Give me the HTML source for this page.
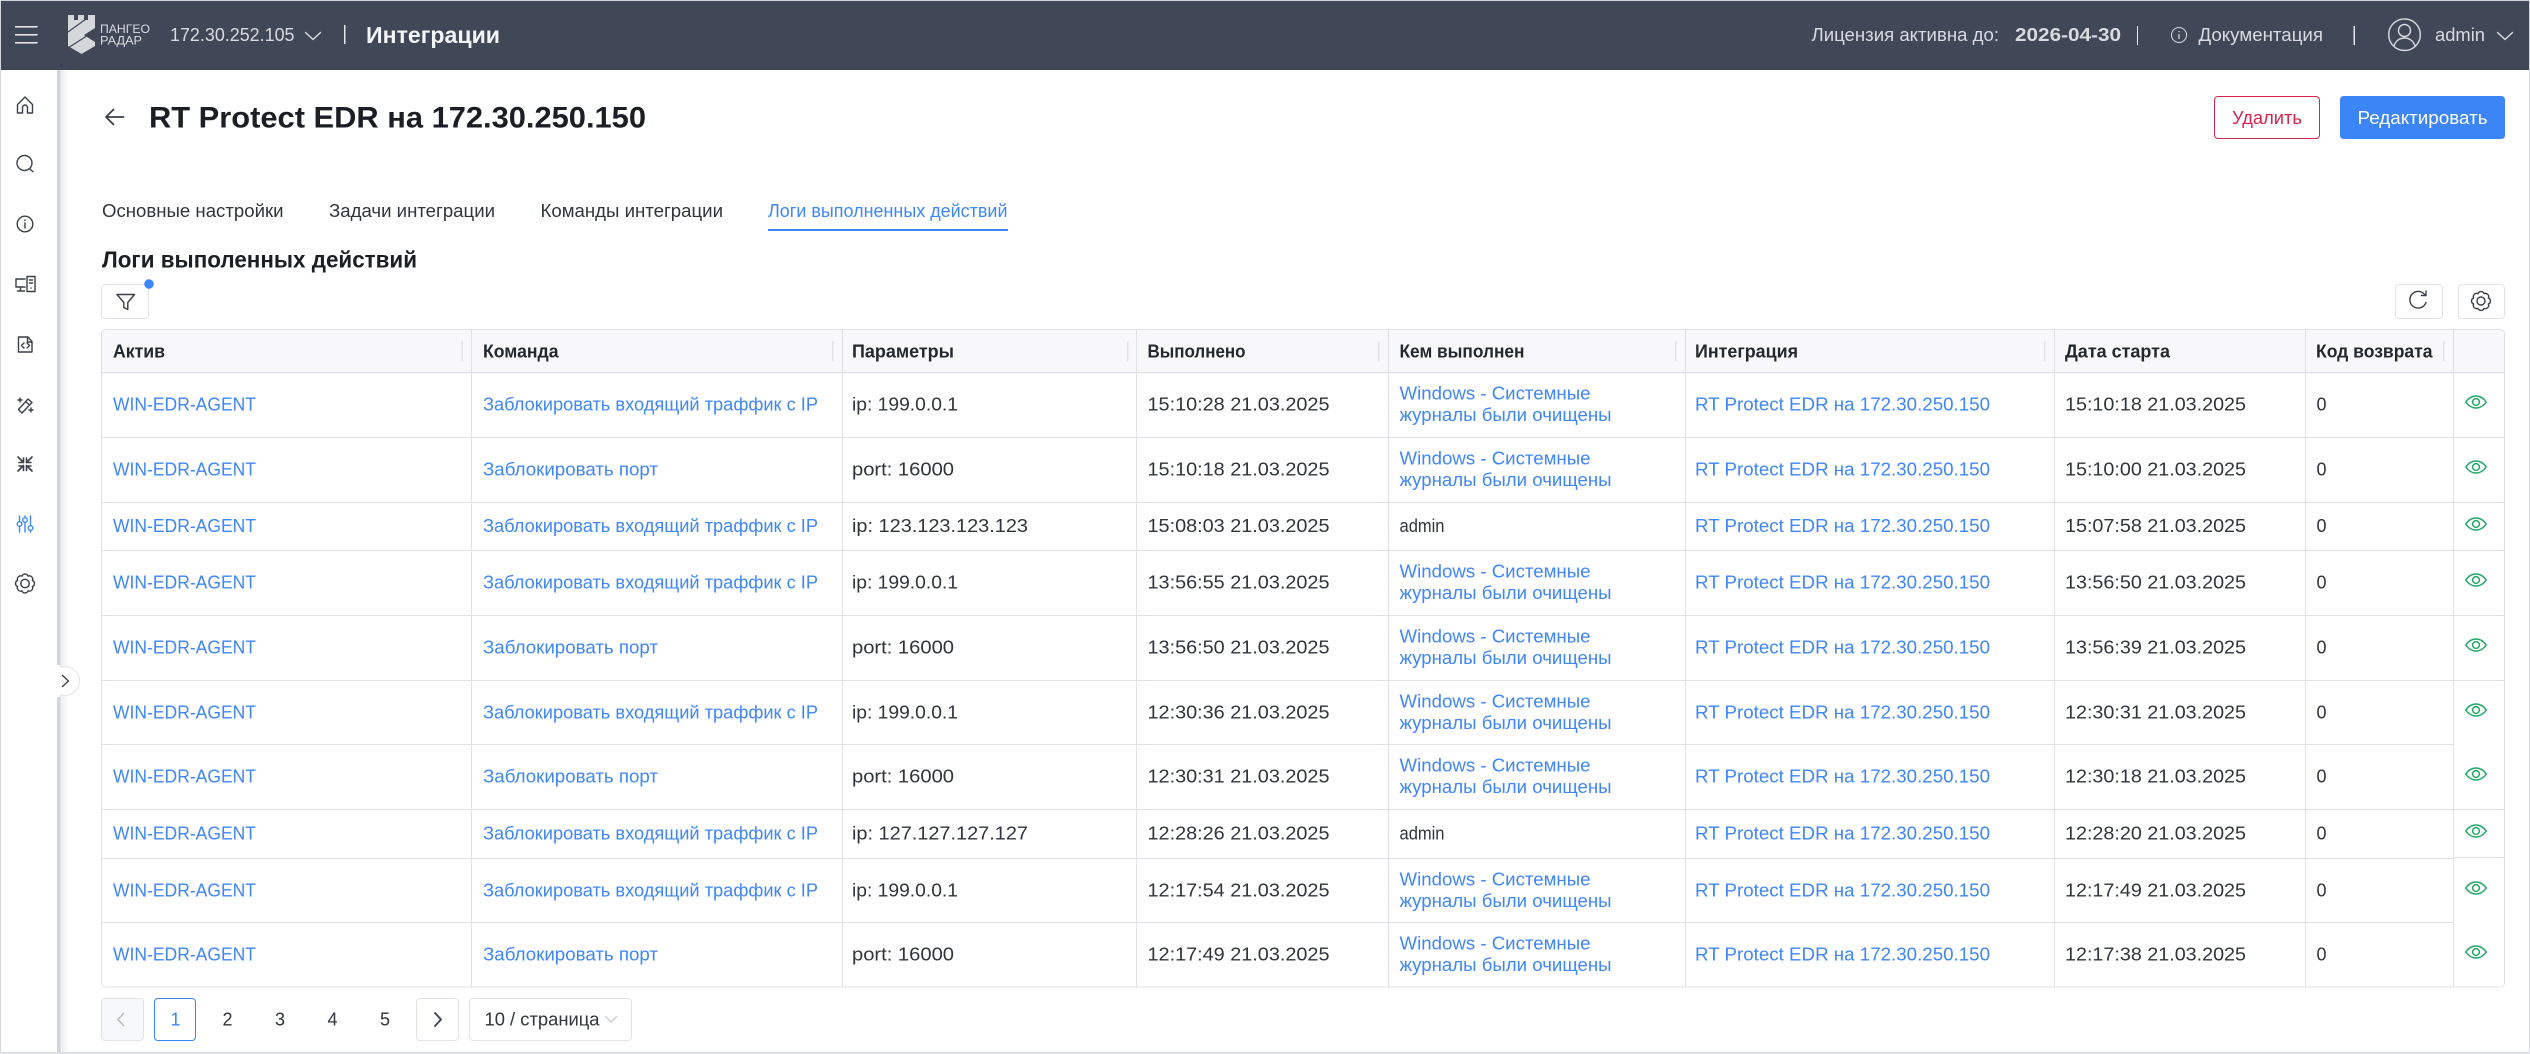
<!DOCTYPE html>
<html lang="ru"><head><meta charset="utf-8"><title>RT Protect EDR</title>
<style>
html,body{margin:0;padding:0;background:#fff;width:2530px;height:1054px;overflow:hidden}
svg{display:block}
text{font-family:"Liberation Sans","Noto Sans CJK SC",sans-serif;font-size:18px;fill:#30343c}
.l{fill:#3f86f8}
.h{font-weight:700;fill:#23272e}
.t{fill:#d9dbe0}
.i{fill:none;stroke:#3a3f48;stroke-width:1.4;stroke-linecap:round;stroke-linejoin:round}
.w{fill:none;stroke:#d9dbe0;stroke-width:1.4;stroke-linecap:round;stroke-linejoin:round}
.e{fill:none;stroke:#22a866;stroke-width:1.5}
</style></head><body>
<svg width="2530" height="1054" viewBox="0 0 2530 1054" xmlns="http://www.w3.org/2000/svg">
<defs>
<linearGradient id="sh" x1="0" x2="1" y1="0" y2="0"><stop offset="0" stop-color="#eceef2"/><stop offset="1" stop-color="#fff"/></linearGradient>
<symbol id="eye" viewBox="0 0 22 14" overflow="visible"><path class="e" d="M.8 7C3.500 3 7 1 11 1s7.500 2 10.200 6C18.500 11 15 13 11 13S3.500 11 .8 7Z"/><circle class="e" cx="11" cy="7" r="3.400"/></symbol>
</defs>
<rect width="2530" height="1054" fill="#fff"/>
<!-- page frame -->
<rect x="0" y="0" width="2530" height="1" fill="#cfd2d8"/>
<rect x="0" y="0" width="1" height="1054" fill="#d5d7de"/>
<rect x="2529" y="0" width="1" height="1054" fill="#d5d7de"/>
<rect x="0" y="1052" width="2530" height="2" fill="#dfe0e6"/>
<!-- top bar -->
<rect x="1" y="1" width="2528" height="69" fill="#404756"/>
<g fill="#e6e7ea"><rect x="15" y="26" width="22.500" height="1.600"/><rect x="15" y="34" width="22.500" height="1.600"/><rect x="15" y="42" width="22.500" height="1.600"/></g>
<path fill="#d5d7db" d="M68 15h6v5h4v-5h6v5h4v-5h7v13l-11 7 11 7v4L81.500 54 68 46Z"/>
<path stroke="#404756" stroke-width="1.200" fill="none" d="M68 32 86 19M68 48 96 30"/>
<text x="100" y="33" textLength="50" lengthAdjust="spacingAndGlyphs" style="font-size:12px;fill:#d9dbe0">ПАНГЕО</text>
<text x="100" y="44.500" textLength="42" lengthAdjust="spacingAndGlyphs" style="font-size:12px;fill:#d9dbe0">РАДАР</text>
<text class="t" x="170" y="41" textLength="124.500" lengthAdjust="spacingAndGlyphs">172.30.252.105</text>
<path class="w" d="M305.500 32.500 313 39.500 320.500 32.500"/>
<rect x="344" y="25" width="1.500" height="19" fill="#e6e7ea"/>
<text x="366" y="43" textLength="134" lengthAdjust="spacingAndGlyphs" style="font-size:23px;font-weight:700;fill:#f4f5f6">Интеграции</text>
<text class="t" x="1811.500" y="41" textLength="187.500" lengthAdjust="spacingAndGlyphs">Лицензия активна до:</text>
<text class="t" x="2015" y="41" textLength="106" lengthAdjust="spacingAndGlyphs" style="font-weight:700">2026-04-30</text>
<rect x="2137" y="26" width="1" height="19" fill="#e6e7ea"/>
<circle class="w" cx="2179" cy="35" r="7.500" style="stroke-width:1"/>
<path d="M2179 34v5M2179 31v1.200" stroke="#d9dbe0" stroke-width="1.200"/>
<text class="t" x="2198.500" y="41" textLength="124.500" lengthAdjust="spacingAndGlyphs">Документация</text>
<rect x="2353.500" y="26" width="1.500" height="19" fill="#e6e7ea"/>
<circle class="w" cx="2404.500" cy="34.700" r="15.800"/>
<circle class="w" cx="2404.500" cy="30.500" r="6"/>
<path class="w" d="M2394 46c1.500-5 5.500-8 10.500-8s9 3 10.500 8"/>
<text class="t" x="2435" y="41" textLength="50" lengthAdjust="spacingAndGlyphs">admin</text>
<path class="w" d="M2497.500 32.500 2505 39.500 2512.500 32.500"/>
<!-- sidebar -->
<rect x="57" y="70" width="3.500" height="982" fill="#d3d5dd"/>
<rect x="60.500" y="70" width="9" height="982" fill="url(#sh)"/>
<path class="i" d="M17.500 104.500 25 97l7.500 7.500v8.500h-5v-5.500a2.500 2.500 0 0 0-5 0v5.500h-5Z"/>
<circle class="i" cx="24.500" cy="163" r="7.500"/><path class="i" d="m30 169 3 2.800"/>
<circle class="i" cx="25" cy="224" r="7.800"/><path class="i" d="M25 223v5M25 220v.5"/>
<path class="i" d="M25 279h-9v8h9M20.500 287v3.500M17.500 291h7"/><rect class="i" x="27" y="276.500" width="8" height="15"/><path class="i" d="M29.500 280h3M29.500 283h3M31 288v.2"/>
<path class="i" d="M18.500 337h9.500l4 4.500v10.500h-13.500ZM27.500 337v5h4.500M24 343l-2.500 2.500 2.500 2.500M27 343l2.500 2.500L27 348"/>
<path class="i" d="m18.500 409.500 9.500-10.500 4 3.500-10 10.500ZM25.500 401.500l4 3.500M20 398v4M18 400h4M31 408v4M29 410h4"/>
<path class="i" style="stroke-width:1.600" d="M18 457l5.500 5.500M23.500 458v4.500H19M32 457 26.500 462.500M26.500 458v4.500h4.500M18 471l5.500-5.500M23.500 470.500v-4.500H19M32 471 26.500 465.500M26.500 470.500v-4.500h4.500"/>
<path class="i" style="stroke:#3f86f8" d="M19.500 516v5.500M19.500 526.500v5.500M25 516v1.500M25 522.500v9.500M30.500 516v9.500M30.500 530.500v1.500"/>
<circle class="i" style="stroke:#3f86f8" cx="19.500" cy="524" r="2.300"/><circle class="i" style="stroke:#3f86f8" cx="25" cy="520" r="2.300"/><circle class="i" style="stroke:#3f86f8" cx="30.500" cy="528" r="2.300"/>
<path class="i" d="M28.060 576.110a3.300 3.300 0 0 1 4.330 4.330a3.300 3.300 0 0 1 0 6.120a3.300 3.300 0 0 1 -4.330 4.330a3.300 3.300 0 0 1 -6.120 0a3.300 3.300 0 0 1 -4.330 -4.330a3.300 3.300 0 0 1 0 -6.120a3.300 3.300 0 0 1 4.330 -4.330a3.300 3.300 0 0 1 6.120 0Z"/>
<circle class="i" cx="25" cy="583.500" r="4.200"/>
<circle cx="65" cy="681" r="14.500" fill="#fff" stroke="#e3e4ea" stroke-width="1"/>
<rect x="50" y="665" width="10" height="32" fill="#fff"/>
<path class="i" d="M62.500 675.500 68.500 681 62.500 686.500"/>
<!-- title -->
<path class="i" style="stroke-width:1.800" d="M123.500 117h-17M113.500 109.500 106 117l7.500 7.500"/>
<text x="149" y="127.500" textLength="497" lengthAdjust="spacingAndGlyphs" style="font-size:30px;font-weight:700;fill:#1b1e24">RT Protect EDR на 172.30.250.150</text>
<rect x="2214.500" y="96.500" width="105" height="42" rx="3.500" fill="#fff" stroke="#d3264f"/>
<text x="2232" y="124" textLength="70" lengthAdjust="spacingAndGlyphs" style="fill:#d3264f">Удалить</text>
<rect x="2340" y="96" width="165" height="43" rx="3.500" fill="#3b85f7"/>
<text x="2357.500" y="124" textLength="130" lengthAdjust="spacingAndGlyphs" style="fill:#fff">Редактировать</text>
<!-- tabs -->
<text x="102" y="217" textLength="181.500" lengthAdjust="spacingAndGlyphs">Основные настройки</text>
<text x="329" y="217" textLength="166" lengthAdjust="spacingAndGlyphs">Задачи интеграции</text>
<text x="540.500" y="217" textLength="182.500" lengthAdjust="spacingAndGlyphs">Команды интеграции</text>
<text class="l" x="768" y="217" textLength="239.500" lengthAdjust="spacingAndGlyphs">Логи выполненных действий</text>
<rect x="768" y="229" width="240" height="2" fill="#3b85f7"/>
<text x="102" y="267.500" textLength="315" lengthAdjust="spacingAndGlyphs" style="font-size:23px;font-weight:700;fill:#1b1e24">Логи выполенных действий</text>
<!-- toolbar -->
<rect x="101.500" y="284.500" width="47" height="34" rx="3.500" fill="#fff" stroke="#e2e3e9"/>
<path class="i" d="M117 294.500h17.500l-6.700 8v7l-4-2v-5Z"/>
<circle cx="149" cy="284" r="4.800" fill="#3b85f7"/>
<rect x="2395.500" y="284.500" width="47" height="34" rx="3.500" fill="#fff" stroke="#e2e3e9"/>
<path class="i" d="M2425 295a8.300 8.300 0 1 0 1 7.500M2426 291v4.500h-4.500" />
<rect x="2458.500" y="284.500" width="46" height="34" rx="3.500" fill="#fff" stroke="#e2e3e9"/>
<path class="i" d="M2484.060 293.610a3.300 3.300 0 0 1 4.330 4.330a3.300 3.300 0 0 1 0 6.120a3.300 3.300 0 0 1 -4.330 4.330a3.300 3.300 0 0 1 -6.120 0a3.300 3.300 0 0 1 -4.330 -4.330a3.300 3.300 0 0 1 0 -6.120a3.300 3.300 0 0 1 4.330 -4.330a3.300 3.300 0 0 1 6.120 0Z"/>
<circle class="i" cx="2481" cy="301" r="4"/>
<!-- table frame -->
<rect x="101.500" y="329.500" width="2403" height="657.500" rx="4" fill="#fff" stroke="#e0e1e8"/>
<path d="M102 372V334a4 4 0 0 1 4-4H2500a4 4 0 0 1 4 4V372Z" fill="#f8f8fb"/>
<g fill="#e0e1e8">
<rect x="102" y="372" width="2402" height="1.300"/>
<rect x="102" y="437" width="2402" height="1"/>
<rect x="102" y="502" width="2402" height="1"/>
<rect x="102" y="550" width="2402" height="1"/>
<rect x="102" y="615" width="2402" height="1"/>
<rect x="102" y="680" width="2402" height="1"/>
<rect x="102" y="744" width="2351" height="1"/>
<rect x="102" y="809" width="2402" height="1"/>
<rect x="102" y="858" width="2351" height="1"/><rect x="2453" y="857" width="51" height="1"/>
<rect x="102" y="922" width="2351" height="1"/>
<rect x="471" y="330" width="1" height="657"/>
<rect x="842" y="330" width="1" height="657"/>
<rect x="1136" y="330" width="1" height="657"/>
<rect x="1388" y="330" width="1" height="657"/>
<rect x="1685" y="330" width="1" height="657"/>
<rect x="2054" y="330" width="1" height="657"/>
<rect x="2305" y="330" width="1" height="657"/>
<rect x="2453" y="330" width="1" height="657"/>
</g>
<g fill="#e3e4ea">
<rect x="461.500" y="341" width="1.500" height="20"/>
<rect x="832" y="341" width="1.500" height="20"/>
<rect x="1127" y="341" width="1.500" height="20"/>
<rect x="1378" y="341" width="1.500" height="20"/>
<rect x="1675" y="341" width="1.500" height="20"/>
<rect x="2044" y="341" width="1.500" height="20"/>
<rect x="2443" y="341" width="1.500" height="20"/>
</g>
<g transform="translate(0,-.5)">
<!-- header -->
<text class="h" x="113" y="358" textLength="52" lengthAdjust="spacingAndGlyphs">Актив</text>
<text class="h" x="483" y="358" textLength="75.500" lengthAdjust="spacingAndGlyphs">Команда</text>
<text class="h" x="852" y="358" textLength="102" lengthAdjust="spacingAndGlyphs">Параметры</text>
<text class="h" x="1147.500" y="358" textLength="98" lengthAdjust="spacingAndGlyphs">Выполнено</text>
<text class="h" x="1399.500" y="358" textLength="125" lengthAdjust="spacingAndGlyphs">Кем выполнен</text>
<text class="h" x="1695" y="358" textLength="103" lengthAdjust="spacingAndGlyphs">Интеграция</text>
<text class="h" x="2065" y="358" textLength="105" lengthAdjust="spacingAndGlyphs">Дата старта</text>
<text class="h" x="2316" y="358" textLength="116.500" lengthAdjust="spacingAndGlyphs">Код возврата</text>
<!-- row 1 -->
<text class="l" x="113" y="411" textLength="143" lengthAdjust="spacingAndGlyphs">WIN-EDR-AGENT</text>
<text class="l" x="483" y="411" textLength="335" lengthAdjust="spacingAndGlyphs">Заблокировать входящий траффик с IP</text>
<text x="852" y="411" textLength="106" lengthAdjust="spacingAndGlyphs">ip: 199.0.0.1</text>
<text x="1147.500" y="411" textLength="182" lengthAdjust="spacingAndGlyphs">15:10:28 21.03.2025</text>
<text class="l" x="1399.500" y="400" textLength="191" lengthAdjust="spacingAndGlyphs">Windows - Системные</text>
<text class="l" x="1399.500" y="421.700" textLength="212" lengthAdjust="spacingAndGlyphs">журналы были очищены</text>
<text class="l" x="1695" y="411" textLength="295" lengthAdjust="spacingAndGlyphs">RT Protect EDR на 172.30.250.150</text>
<text x="2065" y="411" textLength="181" lengthAdjust="spacingAndGlyphs">15:10:18 21.03.2025</text>
<text x="2316.500" y="411" textLength="10" lengthAdjust="spacingAndGlyphs">0</text>
<!-- row 2 -->
<text class="l" x="113" y="476" textLength="143" lengthAdjust="spacingAndGlyphs">WIN-EDR-AGENT</text>
<text class="l" x="483" y="476" textLength="175" lengthAdjust="spacingAndGlyphs">Заблокировать порт</text>
<text x="852" y="476" textLength="102" lengthAdjust="spacingAndGlyphs">port: 16000</text>
<text x="1147.500" y="476" textLength="182" lengthAdjust="spacingAndGlyphs">15:10:18 21.03.2025</text>
<text class="l" x="1399.500" y="465" textLength="191" lengthAdjust="spacingAndGlyphs">Windows - Системные</text>
<text class="l" x="1399.500" y="486.700" textLength="212" lengthAdjust="spacingAndGlyphs">журналы были очищены</text>
<text class="l" x="1695" y="476" textLength="295" lengthAdjust="spacingAndGlyphs">RT Protect EDR на 172.30.250.150</text>
<text x="2065" y="476" textLength="181" lengthAdjust="spacingAndGlyphs">15:10:00 21.03.2025</text>
<text x="2316.500" y="476" textLength="10" lengthAdjust="spacingAndGlyphs">0</text>
<!-- row 3 -->
<text class="l" x="113" y="532.500" textLength="143" lengthAdjust="spacingAndGlyphs">WIN-EDR-AGENT</text>
<text class="l" x="483" y="532.500" textLength="335" lengthAdjust="spacingAndGlyphs">Заблокировать входящий траффик с IP</text>
<text x="852" y="532.500" textLength="176" lengthAdjust="spacingAndGlyphs">ip: 123.123.123.123</text>
<text x="1147.500" y="532.500" textLength="182" lengthAdjust="spacingAndGlyphs">15:08:03 21.03.2025</text>
<text x="1399.500" y="532.500" textLength="45" lengthAdjust="spacingAndGlyphs">admin</text>
<text class="l" x="1695" y="532.500" textLength="295" lengthAdjust="spacingAndGlyphs">RT Protect EDR на 172.30.250.150</text>
<text x="2065" y="532.500" textLength="181" lengthAdjust="spacingAndGlyphs">15:07:58 21.03.2025</text>
<text x="2316.500" y="532.500" textLength="10" lengthAdjust="spacingAndGlyphs">0</text>
<!-- row 4 -->
<text class="l" x="113" y="589" textLength="143" lengthAdjust="spacingAndGlyphs">WIN-EDR-AGENT</text>
<text class="l" x="483" y="589" textLength="335" lengthAdjust="spacingAndGlyphs">Заблокировать входящий траффик с IP</text>
<text x="852" y="589" textLength="106" lengthAdjust="spacingAndGlyphs">ip: 199.0.0.1</text>
<text x="1147.500" y="589" textLength="182" lengthAdjust="spacingAndGlyphs">13:56:55 21.03.2025</text>
<text class="l" x="1399.500" y="578" textLength="191" lengthAdjust="spacingAndGlyphs">Windows - Системные</text>
<text class="l" x="1399.500" y="599.700" textLength="212" lengthAdjust="spacingAndGlyphs">журналы были очищены</text>
<text class="l" x="1695" y="589" textLength="295" lengthAdjust="spacingAndGlyphs">RT Protect EDR на 172.30.250.150</text>
<text x="2065" y="589" textLength="181" lengthAdjust="spacingAndGlyphs">13:56:50 21.03.2025</text>
<text x="2316.500" y="589" textLength="10" lengthAdjust="spacingAndGlyphs">0</text>
<!-- row 5 -->
<text class="l" x="113" y="654" textLength="143" lengthAdjust="spacingAndGlyphs">WIN-EDR-AGENT</text>
<text class="l" x="483" y="654" textLength="175" lengthAdjust="spacingAndGlyphs">Заблокировать порт</text>
<text x="852" y="654" textLength="102" lengthAdjust="spacingAndGlyphs">port: 16000</text>
<text x="1147.500" y="654" textLength="182" lengthAdjust="spacingAndGlyphs">13:56:50 21.03.2025</text>
<text class="l" x="1399.500" y="643" textLength="191" lengthAdjust="spacingAndGlyphs">Windows - Системные</text>
<text class="l" x="1399.500" y="664.700" textLength="212" lengthAdjust="spacingAndGlyphs">журналы были очищены</text>
<text class="l" x="1695" y="654" textLength="295" lengthAdjust="spacingAndGlyphs">RT Protect EDR на 172.30.250.150</text>
<text x="2065" y="654" textLength="181" lengthAdjust="spacingAndGlyphs">13:56:39 21.03.2025</text>
<text x="2316.500" y="654" textLength="10" lengthAdjust="spacingAndGlyphs">0</text>
<!-- row 6 -->
<text class="l" x="113" y="719" textLength="143" lengthAdjust="spacingAndGlyphs">WIN-EDR-AGENT</text>
<text class="l" x="483" y="719" textLength="335" lengthAdjust="spacingAndGlyphs">Заблокировать входящий траффик с IP</text>
<text x="852" y="719" textLength="106" lengthAdjust="spacingAndGlyphs">ip: 199.0.0.1</text>
<text x="1147.500" y="719" textLength="182" lengthAdjust="spacingAndGlyphs">12:30:36 21.03.2025</text>
<text class="l" x="1399.500" y="708" textLength="191" lengthAdjust="spacingAndGlyphs">Windows - Системные</text>
<text class="l" x="1399.500" y="729.700" textLength="212" lengthAdjust="spacingAndGlyphs">журналы были очищены</text>
<text class="l" x="1695" y="719" textLength="295" lengthAdjust="spacingAndGlyphs">RT Protect EDR на 172.30.250.150</text>
<text x="2065" y="719" textLength="181" lengthAdjust="spacingAndGlyphs">12:30:31 21.03.2025</text>
<text x="2316.500" y="719" textLength="10" lengthAdjust="spacingAndGlyphs">0</text>
<!-- row 7 -->
<text class="l" x="113" y="783" textLength="143" lengthAdjust="spacingAndGlyphs">WIN-EDR-AGENT</text>
<text class="l" x="483" y="783" textLength="175" lengthAdjust="spacingAndGlyphs">Заблокировать порт</text>
<text x="852" y="783" textLength="102" lengthAdjust="spacingAndGlyphs">port: 16000</text>
<text x="1147.500" y="783" textLength="182" lengthAdjust="spacingAndGlyphs">12:30:31 21.03.2025</text>
<text class="l" x="1399.500" y="772" textLength="191" lengthAdjust="spacingAndGlyphs">Windows - Системные</text>
<text class="l" x="1399.500" y="793.700" textLength="212" lengthAdjust="spacingAndGlyphs">журналы были очищены</text>
<text class="l" x="1695" y="783" textLength="295" lengthAdjust="spacingAndGlyphs">RT Protect EDR на 172.30.250.150</text>
<text x="2065" y="783" textLength="181" lengthAdjust="spacingAndGlyphs">12:30:18 21.03.2025</text>
<text x="2316.500" y="783" textLength="10" lengthAdjust="spacingAndGlyphs">0</text>
<!-- row 8 -->
<text class="l" x="113" y="840" textLength="143" lengthAdjust="spacingAndGlyphs">WIN-EDR-AGENT</text>
<text class="l" x="483" y="840" textLength="335" lengthAdjust="spacingAndGlyphs">Заблокировать входящий траффик с IP</text>
<text x="852" y="840" textLength="176" lengthAdjust="spacingAndGlyphs">ip: 127.127.127.127</text>
<text x="1147.500" y="840" textLength="182" lengthAdjust="spacingAndGlyphs">12:28:26 21.03.2025</text>
<text x="1399.500" y="840" textLength="45" lengthAdjust="spacingAndGlyphs">admin</text>
<text class="l" x="1695" y="840" textLength="295" lengthAdjust="spacingAndGlyphs">RT Protect EDR на 172.30.250.150</text>
<text x="2065" y="840" textLength="181" lengthAdjust="spacingAndGlyphs">12:28:20 21.03.2025</text>
<text x="2316.500" y="840" textLength="10" lengthAdjust="spacingAndGlyphs">0</text>
<!-- row 9 -->
<text class="l" x="113" y="897" textLength="143" lengthAdjust="spacingAndGlyphs">WIN-EDR-AGENT</text>
<text class="l" x="483" y="897" textLength="335" lengthAdjust="spacingAndGlyphs">Заблокировать входящий траффик с IP</text>
<text x="852" y="897" textLength="106" lengthAdjust="spacingAndGlyphs">ip: 199.0.0.1</text>
<text x="1147.500" y="897" textLength="182" lengthAdjust="spacingAndGlyphs">12:17:54 21.03.2025</text>
<text class="l" x="1399.500" y="886" textLength="191" lengthAdjust="spacingAndGlyphs">Windows - Системные</text>
<text class="l" x="1399.500" y="907.700" textLength="212" lengthAdjust="spacingAndGlyphs">журналы были очищены</text>
<text class="l" x="1695" y="897" textLength="295" lengthAdjust="spacingAndGlyphs">RT Protect EDR на 172.30.250.150</text>
<text x="2065" y="897" textLength="181" lengthAdjust="spacingAndGlyphs">12:17:49 21.03.2025</text>
<text x="2316.500" y="897" textLength="10" lengthAdjust="spacingAndGlyphs">0</text>
<!-- row 10 -->
<text class="l" x="113" y="961" textLength="143" lengthAdjust="spacingAndGlyphs">WIN-EDR-AGENT</text>
<text class="l" x="483" y="961" textLength="175" lengthAdjust="spacingAndGlyphs">Заблокировать порт</text>
<text x="852" y="961" textLength="102" lengthAdjust="spacingAndGlyphs">port: 16000</text>
<text x="1147.500" y="961" textLength="182" lengthAdjust="spacingAndGlyphs">12:17:49 21.03.2025</text>
<text class="l" x="1399.500" y="950" textLength="191" lengthAdjust="spacingAndGlyphs">Windows - Системные</text>
<text class="l" x="1399.500" y="971.700" textLength="212" lengthAdjust="spacingAndGlyphs">журналы были очищены</text>
<text class="l" x="1695" y="961" textLength="295" lengthAdjust="spacingAndGlyphs">RT Protect EDR на 172.30.250.150</text>
<text x="2065" y="961" textLength="181" lengthAdjust="spacingAndGlyphs">12:17:38 21.03.2025</text>
<text x="2316.500" y="961" textLength="10" lengthAdjust="spacingAndGlyphs">0</text>
</g>
<!-- eyes -->
<use href="#eye" x="2465" y="395" width="22" height="14"/>
<use href="#eye" x="2465" y="460" width="22" height="14"/>
<use href="#eye" x="2465" y="517" width="22" height="14"/>
<use href="#eye" x="2465" y="573" width="22" height="14"/>
<use href="#eye" x="2465" y="638" width="22" height="14"/>
<use href="#eye" x="2465" y="703" width="22" height="14"/>
<use href="#eye" x="2465" y="767" width="22" height="14"/>
<use href="#eye" x="2465" y="824" width="22" height="14"/>
<use href="#eye" x="2465" y="881" width="22" height="14"/>
<use href="#eye" x="2465" y="945" width="22" height="14"/>
<!-- pagination -->
<rect x="101.500" y="998.500" width="42" height="42" rx="3.500" fill="#f7f8fa" stroke="#e2e3e9"/>
<path fill="none" stroke="#b8bbc3" stroke-width="1.500" d="M124 1013 118 1019.500 124 1026"/>
<rect x="154.500" y="998.500" width="41" height="42" rx="3.500" fill="#fff" stroke="#3b85f7"/>
<text class="l" x="170.500" y="1025.500">1</text>
<text x="222.500" y="1025.500">2</text>
<text x="275" y="1025.500">3</text>
<text x="327.500" y="1025.500">4</text>
<text x="380" y="1025.500">5</text>
<rect x="416.500" y="998.500" width="42" height="42" rx="3.500" fill="#fff" stroke="#e2e3e9"/>
<path class="i" style="stroke-width:1.800" d="M435 1013 441 1019.500 435 1026"/>
<rect x="469.500" y="998.500" width="162" height="42" rx="3.500" fill="#fff" stroke="#e2e3e9"/>
<text x="484.500" y="1025.500" textLength="115" lengthAdjust="spacingAndGlyphs">10 / страница</text>
<path fill="none" stroke="#c3c5cc" stroke-width="1.200" d="M605 1016 611 1022 617 1016"/>
</svg>
</body></html>
